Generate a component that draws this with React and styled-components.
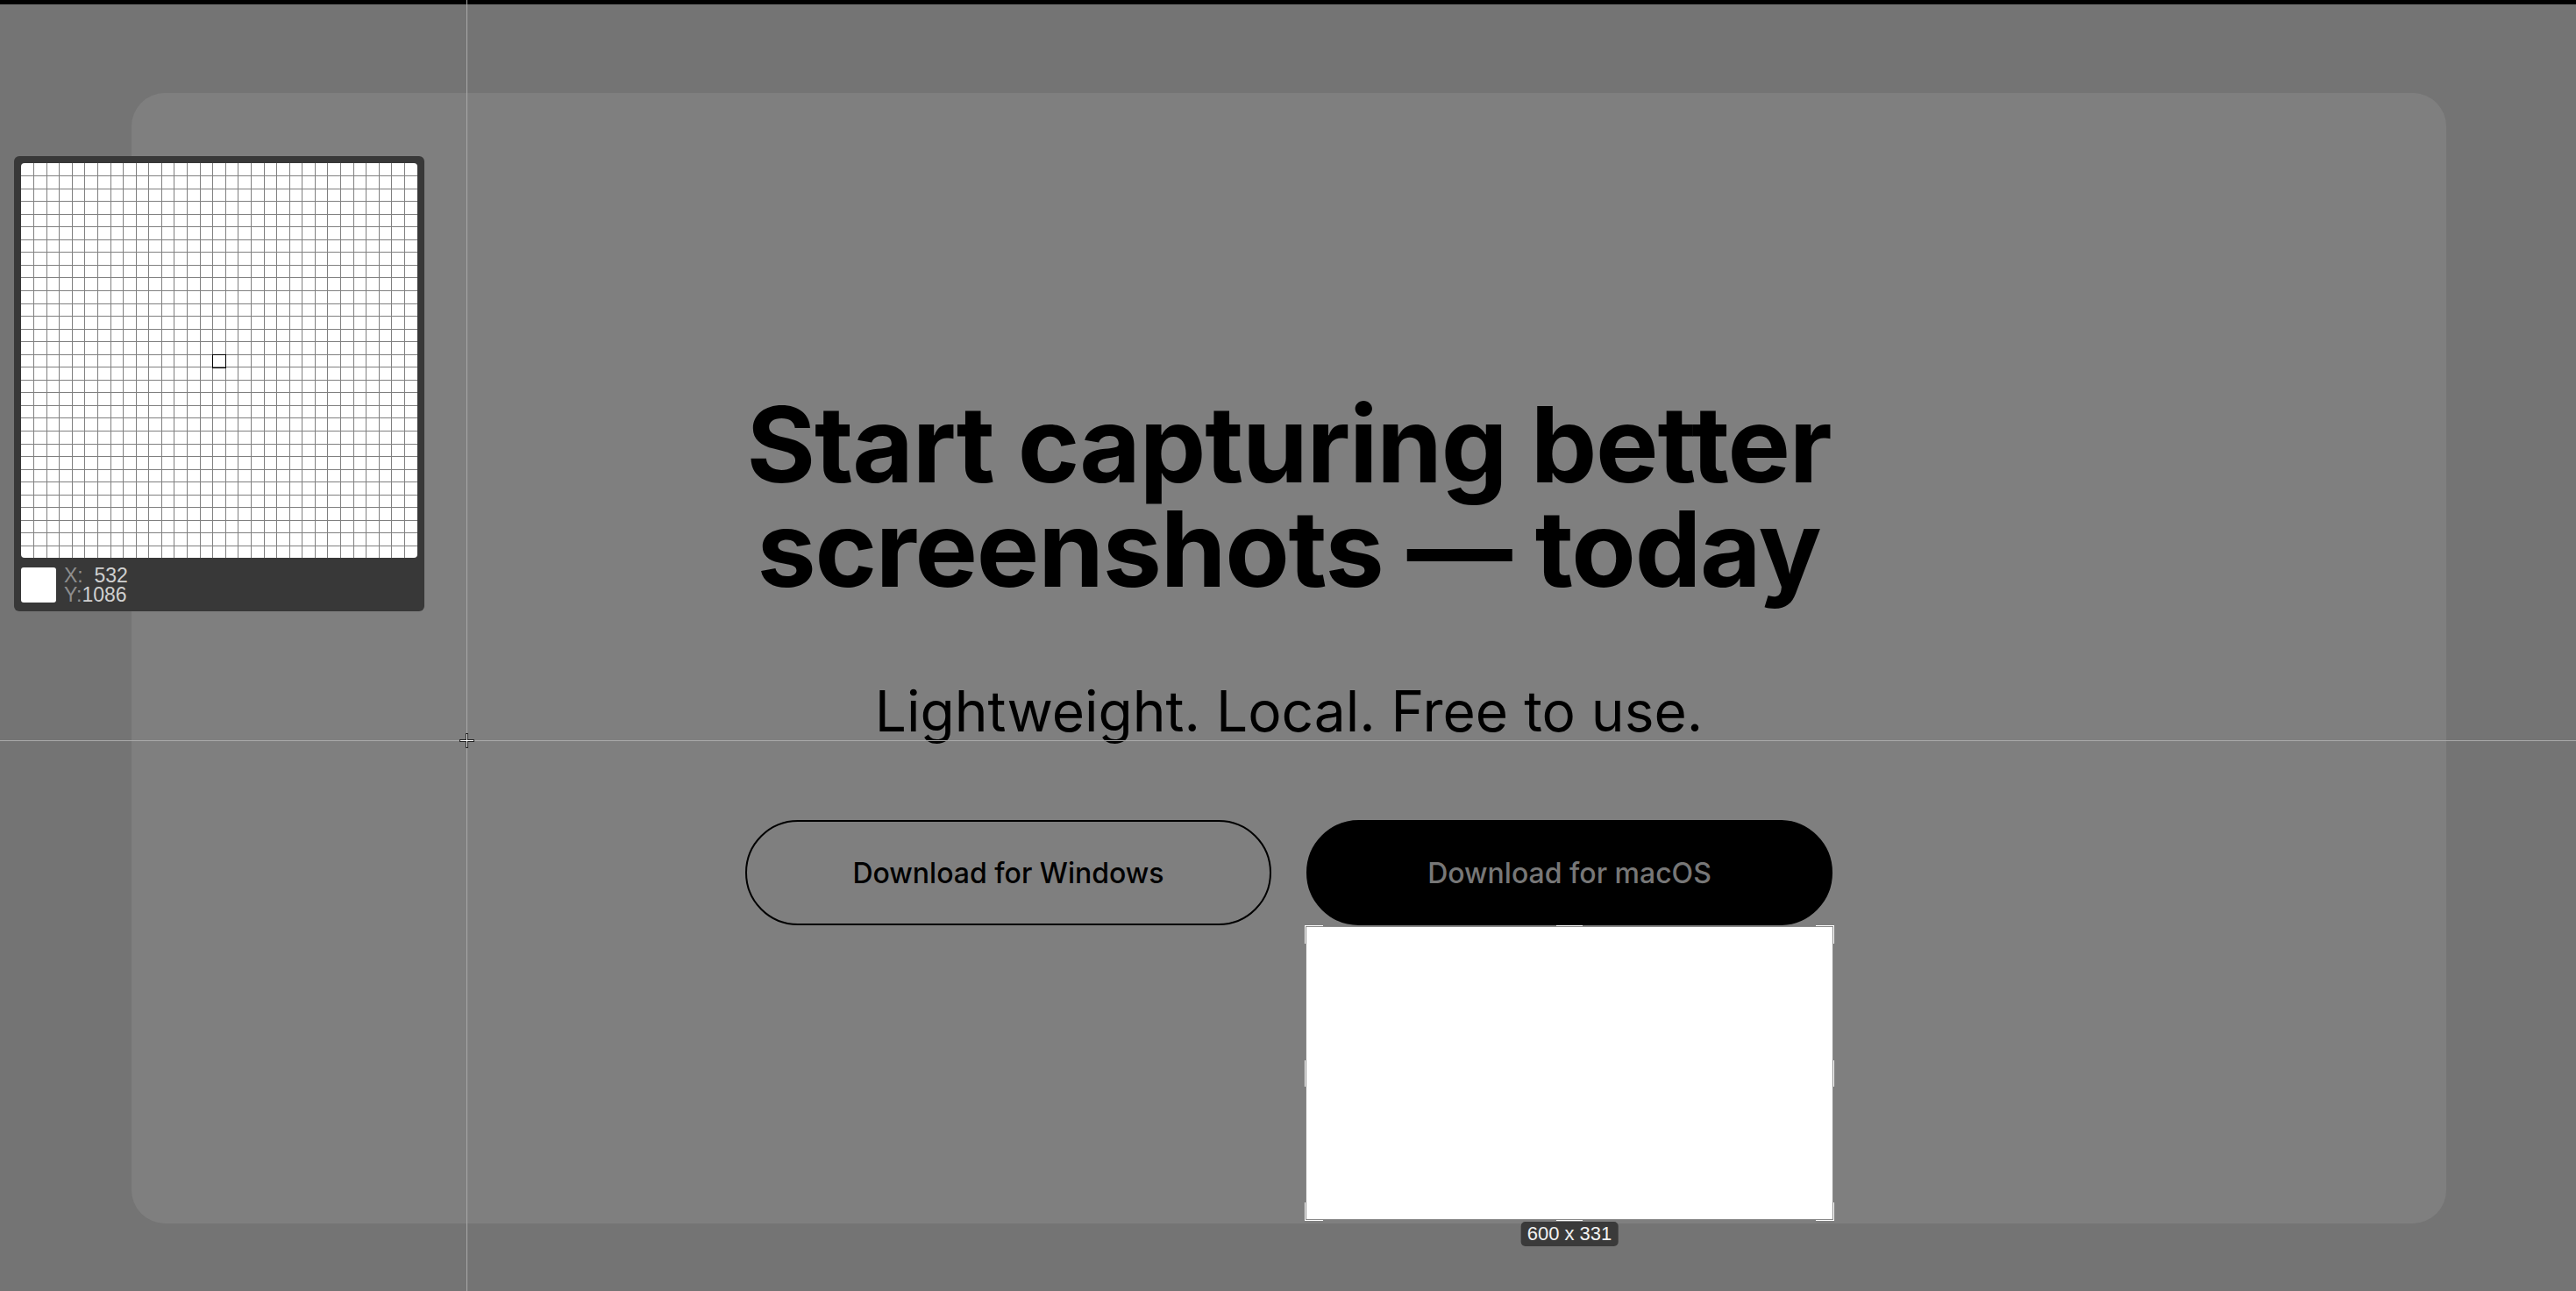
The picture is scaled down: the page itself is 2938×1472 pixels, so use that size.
import React from 'react';
import styled, { createGlobalStyle } from 'styled-components';

const GRID_CELLS = 31;
const GRID_W = 452;
const GRID_H = 451;

const App = () => {
    const steps = Array.from({ length: GRID_CELLS - 1 }, (_, i) => i + 1);
    return (
        <Screen>
            <GlobalStyle/>
            <MenuStrip/>
            <Page>
                <Card>
                    <Title>Start capturing better<br/>screenshots — today</Title>
                    <Tagline>Lightweight. Local. Free to use.</Tagline>
                    <Actions>
                        <PillButton $variant="outline">Download for Windows</PillButton>
                        <SelectionAnchor>
                            <PillButton $variant="solid">Download for macOS</PillButton>
                            <Selection>
                                <Corner $v="top" $h="left"/>
                                <Corner $v="top" $h="right"/>
                                <Corner $v="bottom" $h="left"/>
                                <Corner $v="bottom" $h="right"/>
                                <EdgeHandle $side="top"/>
                                <EdgeHandle $side="bottom"/>
                                <EdgeHandle $side="left"/>
                                <EdgeHandle $side="right"/>
                                <SizeBadge>600 x 331</SizeBadge>
                            </Selection>
                        </SelectionAnchor>
                    </Actions>
                </Card>
            </Page>

            <GuideLine $axis="x" $at={532}/>
            <GuideLine $axis="y" $at={844}/>
            <Cursor>
                <svg width="21" height="21" viewBox="0 0 21 21">
                    <path d="M10.5 2v17M2 10.5h17" stroke="#222" strokeWidth="3"/>
                    <path d="M10.5 3v15M3 10.5h15" stroke="#fff" strokeWidth="1"/>
                </svg>
            </Cursor>

            <Magnifier>
                <Loupe>
                    <svg width={GRID_W} height={GRID_H} shapeRendering="crispEdges">
                        {steps.map(i => (
                            <line key={'v' + i} x1={(i * GRID_W) / GRID_CELLS} x2={(i * GRID_W) / GRID_CELLS}
                                  y1="0" y2={GRID_H} stroke="#808080" strokeWidth="1"/>
                        ))}
                        {steps.map(i => (
                            <line key={'h' + i} y1={(i * GRID_H) / GRID_CELLS} y2={(i * GRID_H) / GRID_CELLS}
                                  x1="0" x2={GRID_W} stroke="#808080" strokeWidth="1"/>
                        ))}
                    </svg>
                    <PixelMark/>
                </Loupe>
                <ReadoutRow>
                    <Swatch/>
                    <Coords>
                        <CoordLine><Axis>X:</Axis>&nbsp;&nbsp;532</CoordLine>
                        <CoordLine><Axis>Y:</Axis>1086</CoordLine>
                    </Coords>
                </ReadoutRow>
            </Magnifier>
        </Screen>
    )
};

export default App;


const GlobalStyle = createGlobalStyle`
  html, body {
    margin: 0;
    padding: 0;
    background: #747474;
  }
  body {
    font-family: Inter, "Liberation Sans", Arial, sans-serif;
  }
`;

const Screen = styled.div`
  position: relative;
  width: 100%;
  min-height: 100vh;
  background: #747474;
  overflow: hidden;
`;

const MenuStrip = styled.div`
  height: 5px;
  background: #000;
`;

const Page = styled.div`
  padding: 101px 148px 77px 150px;
`;

const Card = styled.section`
  height: 1289px;
  box-sizing: border-box;
  padding-top: 341px;
  background: #7f7f7f;
  border-radius: 38px;
  display: flex;
  flex-direction: column;
  align-items: center;
`;

const Title = styled.h1`
  margin: 0;
  font-family: Inter, "Liberation Sans", sans-serif;
  font-weight: 700;
  font-size: 120px;
  line-height: 119px;
  letter-spacing: -0.01em;
  color: #000;
  text-align: center;
  white-space: nowrap;
`;

const Tagline = styled.p`
  margin: 86px 0 0 0;
  font-family: Inter, "Liberation Sans", sans-serif;
  font-weight: 400;
  font-size: 64px;
  line-height: 80px;
  color: #000;
  text-align: center;
`;

const Actions = styled.div`
  margin-top: 84px;
  display: flex;
  gap: 40px;
`;

const PillButton = styled.button`
  width: 600px;
  height: 120px;
  box-sizing: border-box;
  border-radius: 60px;
  font-family: Inter, "Liberation Sans", sans-serif;
  font-weight: 500;
  font-size: 32px;
  cursor: pointer;
  border: 2px solid #000;
  background: ${p => p.$variant === 'solid' ? '#000' : 'transparent'};
  color: ${p => p.$variant === 'solid' ? '#777' : '#000'};
`;

const SelectionAnchor = styled.div`
  position: relative;
  display: flex;
`;

const Selection = styled.div`
  position: absolute;
  left: -1px;
  top: calc(100% + 1px);
  width: 602px;
  height: 335px;
  box-sizing: border-box;
  border: 1px solid #8a8a8a;
  background: #fff;
`;

const Corner = styled.span`
  position: absolute;
  width: 20px;
  height: 20px;
  ${p => p.$v}: -2px;
  ${p => p.$h}: -2px;
  border-${p => p.$v}: 1px solid #fff;
  border-${p => p.$h}: 1px solid #fff;
`;

const EdgeHandle = styled.span`
  position: absolute;
  background: #fff;
  ${p => (p.$side === 'top' || p.$side === 'bottom') ? `
    ${p.$side}: -2px;
    left: 50%;
    width: 30px;
    height: 1px;
    transform: translateX(-50%);
  ` : `
    ${p.$side}: -2px;
    top: 50%;
    width: 1px;
    height: 30px;
    transform: translateY(-50%);
  `}
`;

const SizeBadge = styled.div`
  position: absolute;
  top: calc(100% + 3px);
  left: 50%;
  transform: translateX(-50%);
  height: 28px;
  padding: 0 7px;
  border-radius: 5px;
  background: #3a3a3a;
  color: #f2f2f2;
  font-family: "Liberation Sans", Arial, sans-serif;
  font-size: 22px;
  line-height: 28px;
  white-space: nowrap;
`;

const GuideLine = styled.div`
  position: absolute;
  pointer-events: none;
  background: #a9a9a9;
  ${p => p.$axis === 'x' ? `
    left: ${p.$at}px;
    top: 0;
    bottom: 0;
    width: 1px;
  ` : `
    top: ${p.$at}px;
    left: 0;
    right: 0;
    height: 1px;
  `}
`;

const Cursor = styled.div`
  position: absolute;
  left: 522px;
  top: 834px;
  width: 21px;
  height: 21px;
  pointer-events: none;
  svg { display: block; }
`;

const Magnifier = styled.div`
  position: absolute;
  left: 16px;
  top: 178px;
  width: 468px;
  height: 519px;
  box-sizing: border-box;
  padding: 8px;
  background: #383838;
  border-radius: 6px;
  display: flex;
  flex-direction: column;
  gap: 9px;
`;

const Loupe = styled.div`
  position: relative;
  width: 452px;
  height: 451px;
  background: #fff;
  border-radius: 4px;
  overflow: hidden;
  svg { display: block; }
`;

const PixelMark = styled.div`
  position: absolute;
  left: 218px;
  top: 218px;
  width: 16px;
  height: 16px;
  box-sizing: border-box;
  border: 1px solid #000;
`;

const ReadoutRow = styled.div`
  display: flex;
  align-items: center;
  gap: 9px;
`;

const Swatch = styled.div`
  width: 40px;
  height: 40px;
  border-radius: 3px;
  background: #fff;
`;

const Coords = styled.div`
  display: flex;
  flex-direction: column;
  font-family: "Liberation Sans", Arial, sans-serif;
  font-size: 23px;
  line-height: 22px;
  color: #d0d0d0;
`;

const CoordLine = styled.div`
  white-space: pre;
`;

const Axis = styled.span`
  color: #8e8e8e;
`;
